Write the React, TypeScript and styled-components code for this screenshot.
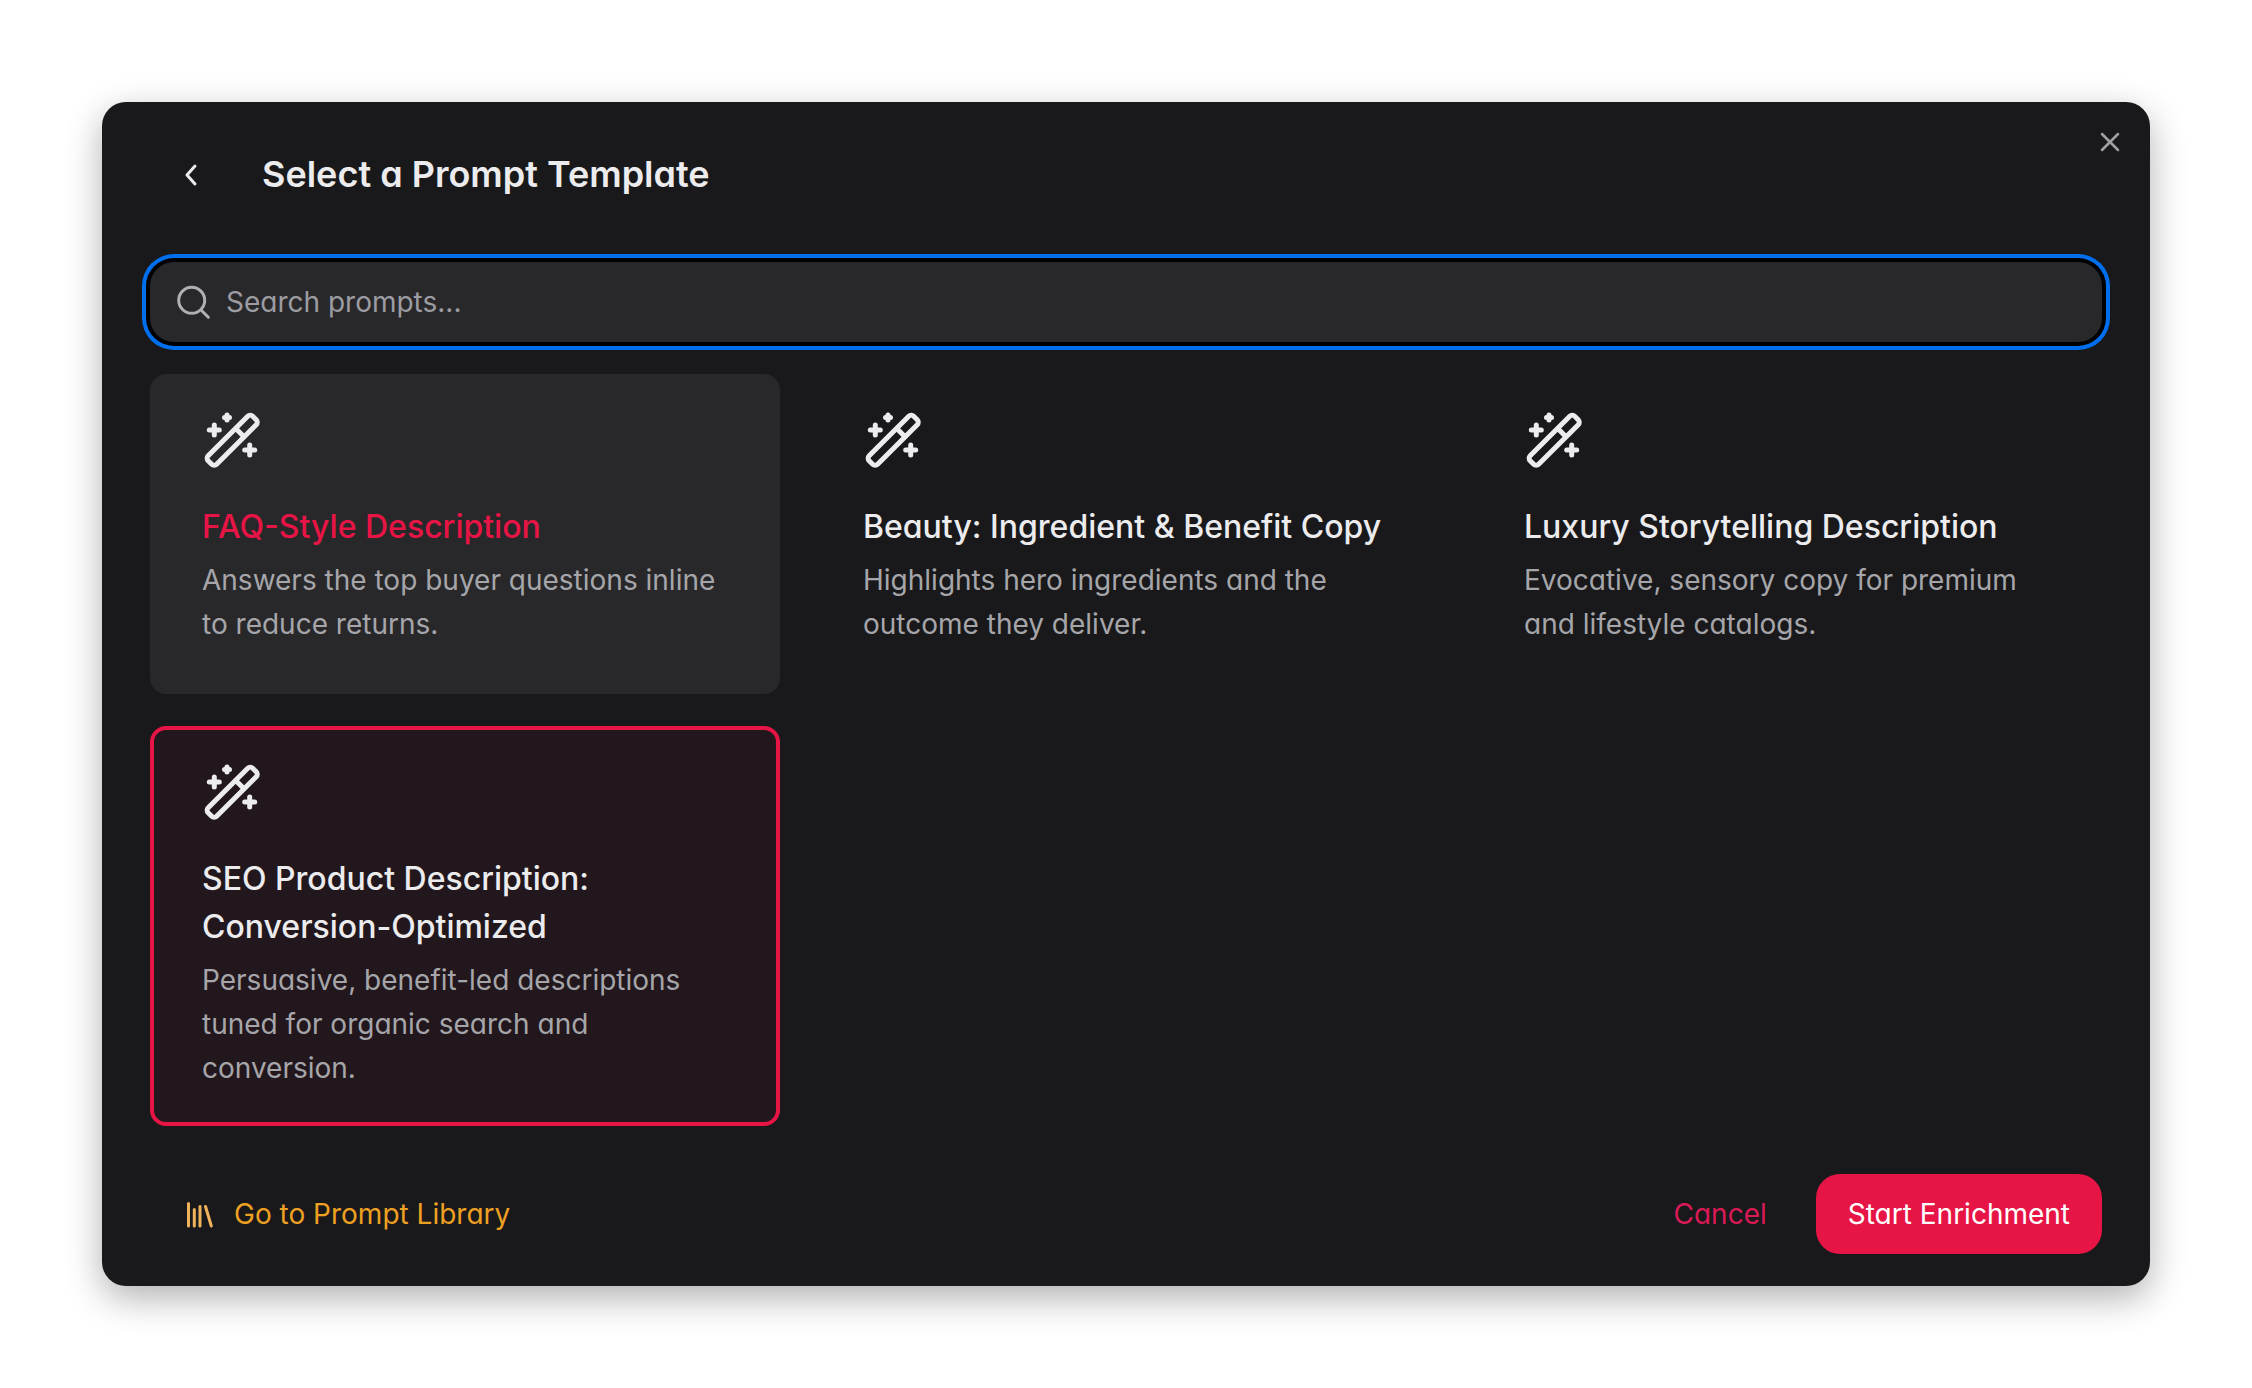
import React, { useState } from "react";
import styled, { createGlobalStyle } from "styled-components";

const color = {
  surface: "#19191b",
  raised: "#28282a",
  text: "#ececee",
  muted: "#a6a6aa",
  accent: "#e71446",
  accentSoft: "#22171d",
  warning: "#eda022",
  focus: "#006fee",
};

const GlobalStyle = createGlobalStyle`
  *, *::before, *::after { box-sizing: border-box; }
  body {
    margin: 0;
    background: #ffffff;
    font-family: Inter, "Liberation Sans", sans-serif;
    font-feature-settings: "cv11";
    -webkit-font-smoothing: antialiased;
  }
  button, input { font: inherit; font-feature-settings: inherit; color: inherit; }
`;

const Page = styled.main`
  padding: 102px;
`;

const Dialog = styled.section`
  position: relative;
  padding: 32px 48px;
  border-radius: 24px;
  background: ${color.surface};
  color: ${color.text};
  box-shadow: 0 12px 36px rgba(0, 0, 0, 0.31);
`;

const Header = styled.header`
  display: flex;
  align-items: center;
  gap: 32px;
  height: 80px;
  margin-bottom: 48px;
`;

const Title = styled.h1`
  margin: 0;
  font-size: 36px;
  line-height: 56px;
  font-weight: 600;
`;

const IconButton = styled.button`
  display: flex;
  align-items: center;
  justify-content: center;
  width: 80px;
  height: 80px;
  padding: 0;
  border: 0;
  border-radius: 24px;
  background: transparent;
  cursor: pointer;
`;

const CloseButton = styled(IconButton)`
  position: absolute;
  top: 0;
  right: 0;
  color: #a1a1a5;
`;

const SearchField = styled.label`
  display: flex;
  align-items: center;
  gap: 12px;
  height: 80px;
  padding: 0 24px;
  border-radius: 24px;
  background: ${color.raised};
  color: #b0b0b2;
  box-shadow: 0 0 0 4px #000000, 0 0 0 8px ${color.focus};
`;

const SearchInput = styled.input`
  flex: 1;
  min-width: 0;
  padding: 0;
  border: 0;
  outline: 0;
  background: transparent;
  color: ${color.text};
  font-size: 28px;
  line-height: 40px;
  &::placeholder { color: #9c9ca2; opacity: 1; }
`;

const Grid = styled.div`
  display: grid;
  grid-template-columns: repeat(3, minmax(0, 1fr));
  gap: 32px 31px;
  margin: 32px 0 48px;
`;

const Card = styled.button<{ $selected: boolean; $active: boolean }>`
  display: flex;
  flex-direction: column;
  align-items: flex-start;
  min-height: 320px;
  padding: 32px 48px;
  border: 4px solid ${(p) => (p.$selected ? color.accent : "transparent")};
  border-radius: 16px;
  background: ${(p) => (p.$selected ? color.accentSoft : p.$active ? color.raised : "transparent")};
  background-clip: ${(p) => (p.$selected ? "padding-box" : "border-box")};
  text-align: left;
  cursor: pointer;
`;

const CardTitle = styled.span<{ $active: boolean }>`
  margin: 33px 0 7px;
  font-size: 32px;
  line-height: 48px;
  font-weight: 500;
  color: ${(p) => (p.$active ? color.accent : color.text)};
`;

const CardText = styled.span`
  font-size: 28px;
  line-height: 44px;
  color: ${color.muted};
`;

const Footer = styled.footer`
  display: flex;
  align-items: center;
  justify-content: space-between;
`;

const Actions = styled.div`
  display: flex;
  gap: 17px;
`;

const LibraryLink = styled.a`
  display: flex;
  align-items: center;
  gap: 16px;
  height: 80px;
  padding: 0 32px;
  font-size: 28px;
  line-height: 40px;
  color: ${color.warning};
  text-decoration: none;
`;

const Button = styled.button<{ $solid?: boolean }>`
  height: 80px;
  padding: 0 32px;
  border: 0;
  border-radius: 24px;
  background: ${(p) => (p.$solid ? color.accent : "transparent")};
  color: ${(p) => (p.$solid ? "#ffffff" : "#d91a57")};
  font-size: 28px;
  line-height: 40px;
  cursor: pointer;
`;

const WandIcon = () => (
  <svg width="60" height="60" viewBox="0 0 60 60" fill="none" stroke={color.text} strokeWidth="5" strokeLinecap="round" strokeLinejoin="round" aria-hidden="true">
    <rect x="-31.5" y="-6" width="63" height="12" rx="3.5" transform="translate(30.2 30.2) rotate(-45)" />
    <path d="M34 18.800l7.800 7.800" />
    <path d="M12.300 15v10M7.300 20h10M47.700 35v10M42.700 40h10" />
    <path d="M25 5v5M22.500 7.500h5" />
  </svg>
);

const ChevronIcon = () => (
  <svg width="40" height="40" viewBox="0 0 40 40" fill="none" stroke={color.text} strokeWidth="3" strokeLinecap="round" strokeLinejoin="round" aria-hidden="true">
    <path d="M25 12l-8 9 8 9" />
  </svg>
);

const CloseIcon = () => (
  <svg width="32" height="32" viewBox="0 0 32 32" fill="none" stroke="currentColor" strokeWidth="2.500" strokeLinecap="round" aria-hidden="true">
    <path d="M8 8l16 16M24 8L8 24" />
  </svg>
);

const SearchIcon = () => (
  <svg width="40" height="40" viewBox="0 0 40 40" fill="none" stroke="currentColor" strokeWidth="3" strokeLinecap="round" aria-hidden="true">
    <circle cx="17.700" cy="18.300" r="13" />
    <path d="M27.300 28.300l7 7" />
  </svg>
);

const LibraryIcon = () => (
  <svg width="36" height="36" viewBox="0 0 36 36" fill="none" stroke="#f0b35c" strokeWidth="3" strokeLinecap="round" aria-hidden="true">
    <path d="M6.500 7.500v22.500M12.300 13.500v16.500M18 10.500v19.500M23.500 10.500l5.800 19.500" />
  </svg>
);

const templates = [
  { title: "FAQ-Style Description", text: "Answers the top buyer questions inline to reduce returns." },
  { title: "Beauty: Ingredient & Benefit Copy", text: "Highlights hero ingredients and the outcome they deliver." },
  { title: "Luxury Storytelling Description", text: "Evocative, sensory copy for premium and lifestyle catalogs." },
  { title: "SEO Product Description: Conversion-Optimized", text: "Persuasive, benefit-led descriptions tuned for organic search and conversion." },
];

export default function App() {
  const [selected, setSelected] = useState(3);
  const [active, setActive] = useState(0);

  return (
    <>
      <GlobalStyle />
      <Page>
        <Dialog role="dialog" aria-labelledby="dialog-title">
          <CloseButton type="button" aria-label="Close">
            <CloseIcon />
          </CloseButton>
          <Header>
            <IconButton type="button" aria-label="Back">
              <ChevronIcon />
            </IconButton>
            <Title id="dialog-title">Select a Prompt Template</Title>
          </Header>
          <SearchField>
            <SearchIcon />
            <SearchInput type="text" placeholder="Search prompts..." aria-label="Search prompts" />
          </SearchField>
          <Grid>
            {templates.map((t, i) => (
              <Card
                key={t.title}
                type="button"
                aria-pressed={selected === i}
                $selected={selected === i}
                $active={active === i}
                onMouseEnter={() => setActive(i)}
                onClick={() => setSelected(i)}
              >
                <WandIcon />
                <CardTitle $active={active === i}>{t.title}</CardTitle>
                <CardText>{t.text}</CardText>
              </Card>
            ))}
          </Grid>
          <Footer>
            <LibraryLink href="#library">
              <LibraryIcon />
              Go to Prompt Library
            </LibraryLink>
            <Actions>
              <Button type="button">Cancel</Button>
              <Button type="button" $solid>Start Enrichment</Button>
            </Actions>
          </Footer>
        </Dialog>
      </Page>
    </>
  );
}
